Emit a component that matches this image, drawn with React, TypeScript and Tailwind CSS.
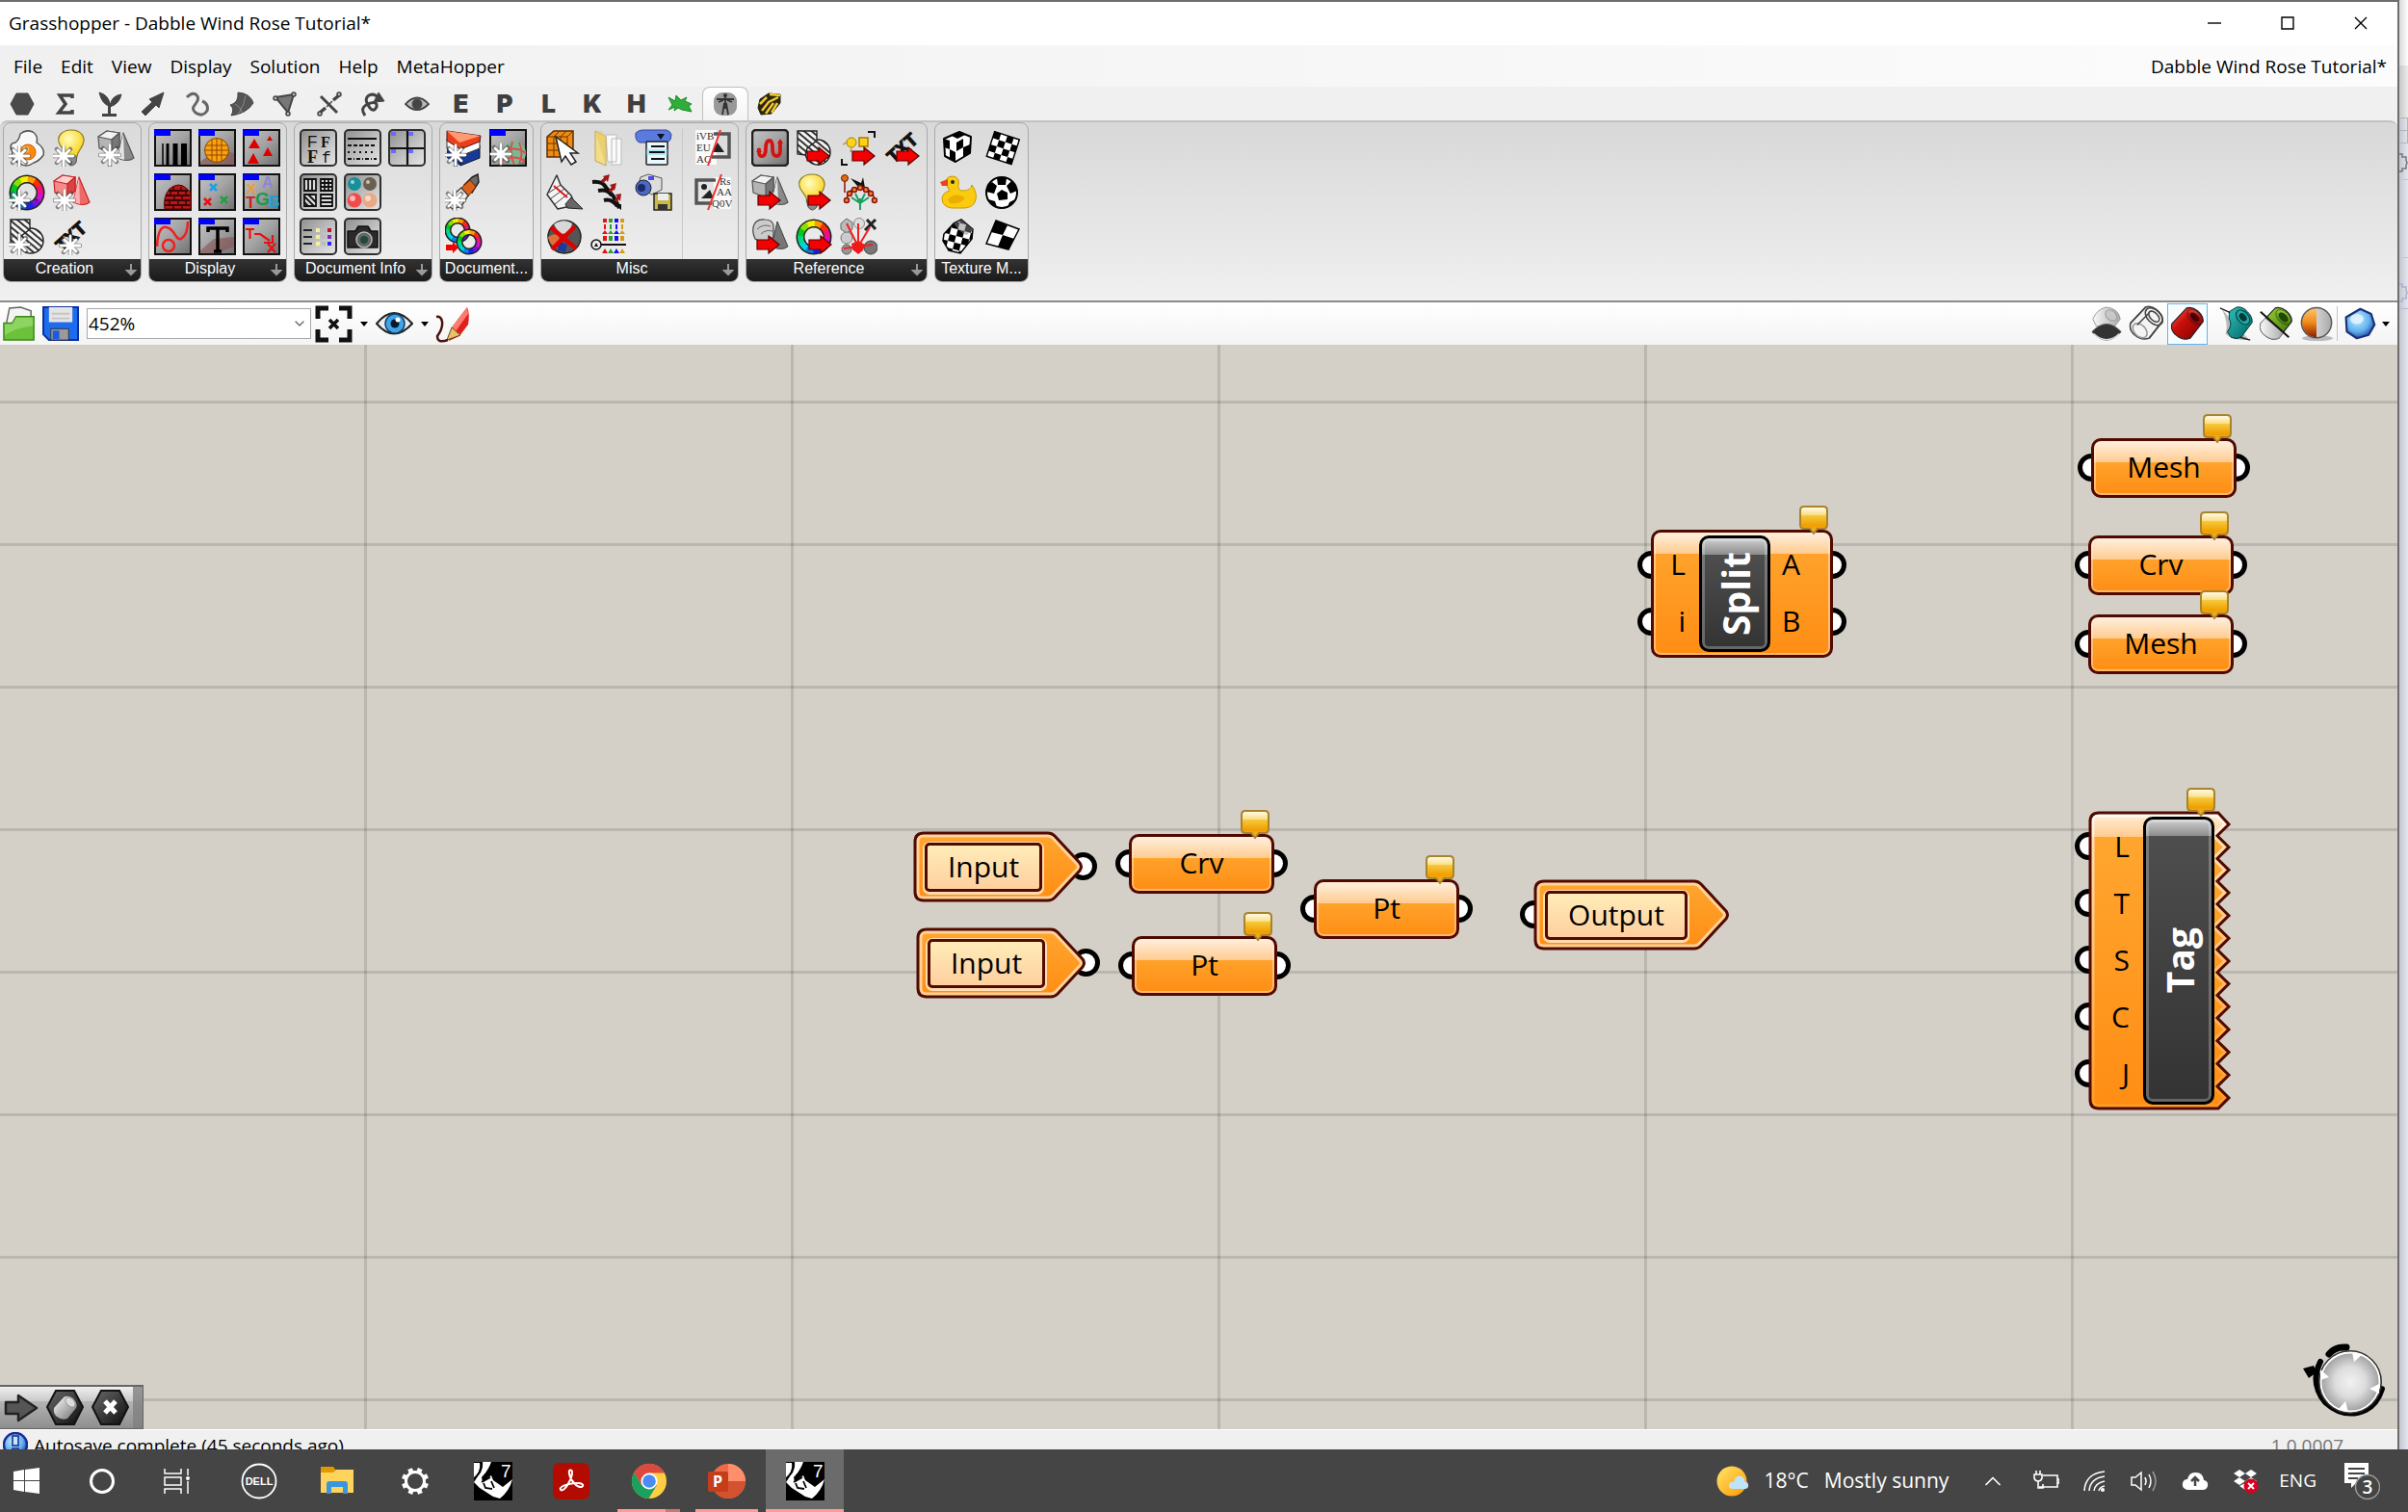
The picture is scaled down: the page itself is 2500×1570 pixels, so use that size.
import type { ReactNode } from "react";
import { ChevronDown, ChevronUp } from "lucide-react";

type Kids = { children?: ReactNode };

const hues = [
  "#ff2a00", "#ff9d00", "#f4f000", "#8be000", "#00c81e", "#00d68c",
  "#00d5e0", "#0084f0", "#1c22e8", "#7a10e0", "#d010d0", "#f0107a",
];

/* ---------- drawing helpers ---------- */

function Defs() {
  return (
    <svg className="absolute h-0 w-0" aria-hidden>
      <defs>
        <linearGradient id="plate" x1="0" y1="0" x2="1" y2="1">
          <stop offset="0" stopColor="#c4c4c4" />
          <stop offset=".5" stopColor="#a2a2a2" />
          <stop offset="1" stopColor="#6f6f6f" />
        </linearGradient>
        <linearGradient id="tile" x1="0" y1="0" x2="1" y2="1">
          <stop offset="0" stopColor="#8f8f8f" />
          <stop offset=".6" stopColor="#c6c6c6" />
          <stop offset="1" stopColor="#e6e6e6" />
        </linearGradient>
        <linearGradient id="steel" x1="0" y1="0" x2="1" y2="1">
          <stop offset="0" stopColor="#ffffff" />
          <stop offset="1" stopColor="#6e6e6e" />
        </linearGradient>
        <linearGradient id="silver" x1="0" y1="0" x2="1" y2="0">
          <stop offset="0" stopColor="#fafafa" />
          <stop offset="1" stopColor="#a8a8a8" />
        </linearGradient>
        <linearGradient id="amber" x1="0" y1="0" x2="0" y2="1">
          <stop offset="0" stopColor="#ffc46a" />
          <stop offset=".5" stopColor="#f08a18" />
          <stop offset="1" stopColor="#8e1c00" />
        </linearGradient>
        <linearGradient id="orange" x1="0" y1="0" x2="0" y2="1">
          <stop offset="0" stopColor="#ffa62f" />
          <stop offset="1" stopColor="#ff8d14" />
        </linearGradient>
        <linearGradient id="balloon" x1="0" y1="0" x2="0" y2="1">
          <stop offset="0" stopColor="#fffdf0" />
          <stop offset=".3" stopColor="#fbe08a" />
          <stop offset=".34" stopColor="#f6c83c" />
          <stop offset=".7" stopColor="#f09f00" />
          <stop offset="1" stopColor="#f0b640" />
        </linearGradient>
        <linearGradient id="red" x1="0" y1="0" x2="1" y2="1">
          <stop offset="0" stopColor="#ff6a5a" />
          <stop offset=".4" stopColor="#c80f0a" />
          <stop offset="1" stopColor="#7a0000" />
        </linearGradient>
        <linearGradient id="teal" x1="0" y1="0" x2="1" y2="1">
          <stop offset="0" stopColor="#2ec4c0" />
          <stop offset="1" stopColor="#005f5f" />
        </linearGradient>
        <linearGradient id="green" x1="0" y1="0" x2="1" y2="1">
          <stop offset="0" stopColor="#a8dc3a" />
          <stop offset="1" stopColor="#2f6a00" />
        </linearGradient>
        <linearGradient id="hex" x1="0" y1="0" x2="1" y2="1">
          <stop offset="0" stopColor="#6a6a6a" />
          <stop offset="1" stopColor="#0c0c0c" />
        </linearGradient>
        <linearGradient id="sun" x1="0" y1="0" x2="1" y2="1">
          <stop offset="0" stopColor="#ffe66a" />
          <stop offset="1" stopColor="#ff9800" />
        </linearGradient>
        <radialGradient id="sky" cx=".4" cy=".35" r=".7">
          <stop offset="0" stopColor="#c8ecff" />
          <stop offset=".6" stopColor="#62b2ee" />
          <stop offset="1" stopColor="#1c3a9a" />
        </radialGradient>
        <radialGradient id="dial" cx=".5" cy=".5" r=".5">
          <stop offset="0" stopColor="#f2f2f2" />
          <stop offset=".5" stopColor="#dcdcdc" />
          <stop offset="1" stopColor="#9a9a9a" />
        </radialGradient>
        <radialGradient id="bulb" cx=".4" cy=".35" r=".7">
          <stop offset="0" stopColor="#fffcc0" />
          <stop offset="1" stopColor="#f8d010" />
        </radialGradient>
        <pattern id="hatch" width="5" height="5" patternUnits="userSpaceOnUse" patternTransform="rotate(40)">
          <rect width="5" height="5" fill="#f4f4f4" />
          <rect width="5" height="2" fill="#333" />
        </pattern>
        <pattern id="check" width="14" height="14" patternUnits="userSpaceOnUse" patternTransform="rotate(15)">
          <rect width="14" height="14" fill="#fff" />
          <path d="M0 0h7v7H0zM7 7h7v7H7z" fill="#000" />
        </pattern>
      </defs>
    </svg>
  );
}

function Svg({ children, className = "h-[39px] w-[39px]" }: Kids & { className?: string }) {
  return (
    <svg viewBox="0 0 39 39" className={className} fill="none" aria-hidden>
      {children}
    </svg>
  );
}

const Plate = ({ children }: Kids) => (
  <Svg>
    <rect x="1" y="1" width="37" height="37" fill="url(#plate)" stroke="#111" strokeWidth="2" />
    {children}
    <rect x="0" y="1" width="17" height="6" fill="#0000ff" />
  </Svg>
);

const Tile = ({ children }: Kids) => (
  <Svg>
    <rect x="1" y="1" width="37" height="37" rx="4" fill="url(#tile)" stroke="#2e2e2e" strokeWidth="2" />
    {children}
  </Svg>
);

const Spark = ({ x = 13, y = 26 }) => (
  <g transform={`translate(${x} ${y})`} strokeLinecap="round">
    <path d="M0-9V11M-10 0H10M-7-7L7 7M7-7L-7 7" stroke="#333" strokeWidth="4.500" opacity=".55" />
    <path d="M0-10V10M-10 0H10M-6-6L6 6M6-6L-6 6" stroke="#fff" strokeWidth="2.800" />
  </g>
);

const RedArrow = ({ x = 10, y = 27 }) => (
  <path
    transform={`translate(${x} ${y})`}
    d="M1-5H13V-9L24 0 13 9V5H1Z"
    fill="#f40000"
    stroke="#5a0000"
    strokeWidth="1.2"
  />
);

const Ring = ({ cx = 19, cy = 20, r = 14, w = 6 }) => (
  <g transform={`rotate(-60 ${cx} ${cy})`}>
    <circle cx={cx} cy={cy} r={r} stroke="#222" strokeWidth={w + 3} fill="none" />
    {hues.map((c, i) => (
      <circle
        key={c}
        cx={cx}
        cy={cy}
        r={r}
        stroke={c}
        strokeWidth={w}
        pathLength="12"
        strokeDasharray="1.1 10.9"
        strokeDashoffset={i}
      />
    ))}
  </g>
);

const Solids = ({ tint = false }) => (
  <g stroke={tint ? "#c22" : "#555"} strokeWidth="1.2" strokeLinejoin="round">
    <path d="M27 4L38 30Q32 35 21 30Z" fill={tint ? "#ee6a6a" : "#8a8a8a"} />
    <path d="M27 4L21 30 28 32Z" fill={tint ? "#ffb0b0" : "#e4e4e4"} stroke="none" />
    <path d="M1 8L10 2 23 4 23 18 15 25 2 20Z" fill={tint ? "#f58a8a" : "#b4b4b4"} />
    <path d="M1 8L10 2 23 4 15 11Z" fill={tint ? "#ffd0d0" : "#f2f2f2"} />
    <path d="M15 11L23 4V18L15 25Z" fill={tint ? "#d84444" : "#777"} />
  </g>
);

const Bulb = () => (
  <g>
    <path d="M11 27H23L22 35Q17 41 13 35Z" fill="#8a8a8a" stroke="#555" />
    <path d="M17 1C28 1 32 9 29 16C27 21 24 23 23 28H12C11 23 8 21 5 16C1 8 7 1 17 1Z" fill="url(#bulb)" stroke="#8a7a20" strokeWidth="1.2" />
  </g>
);

const Hatched = () => (
  <g fill="url(#hatch)" stroke="#222" strokeWidth="1.4">
    <circle cx="23" cy="24" r="13" />
    <path d="M2 2H22V12L12 20 10 27 2 26Z" />
  </g>
);

const Txt = () => (
  <text
    transform="rotate(-42 19 20)"
    x="19"
    y="26"
    textAnchor="middle"
    fontSize="20"
    fontWeight="700"
    fill="#111"
    stroke="#111"
    fontFamily="Liberation Mono, monospace"
  >
    TXT
  </text>
);

const Camera = () => (
  <g>
    <path d="M4 14H12L15 9H25L28 14H35V31H4Z" fill="#2a2a2a" stroke="#111" strokeWidth="1.5" strokeLinejoin="round" />
    <circle cx="21" cy="23" r="8" fill="#666" stroke="#bbb" strokeWidth="1.5" />
    <circle cx="21" cy="23" r="4" fill="#1e4a3a" />
  </g>
);

/* ---------- ribbon icons ---------- */

const icons: Record<string, ReactNode> = {
  "New object": (
    <Svg>
      <path d="M12 5Q18 0 25 3Q31 7 29 14Q38 20 36 27Q32 33 26 35Q18 41 11 35Q1 32 4 24Q-1 15 7 14Q11 11 12 5Z" fill="#f8f8f8" stroke="#555" strokeWidth="1.5" />
      <circle cx="20" cy="24" r="8" fill="#ff8a0c" stroke="#c66000" />
      <circle cx="18" cy="21" r="3" fill="#ffd48a" />
      <Spark x={11} y={28} />
    </Svg>
  ),
  "New light": <Svg><g transform="translate(2 0)"><Bulb /></g><Spark x={11} y={28} /></Svg>,
  "New block": <Svg><Solids /><Spark x={13} y={27} /></Svg>,
  "New colour": <Svg><Ring /><Spark x={11} y={28} /></Svg>,
  "New red block": <Svg><Solids tint /><Spark x={12} y={28} /></Svg>,
  "New hatch": <Svg><Hatched /><Spark x={11} y={28} /></Svg>,
  "New text": <Svg><Txt /><Spark x={18} y={29} /></Svg>,

  "Line weights": (
    <Plate>
      <path d="M9 15V38" stroke="#000" strokeWidth="1.5" />
      <path d="M14 15V38" stroke="#000" strokeWidth="3" />
      <path d="M22 15V38" stroke="#000" strokeWidth="5" />
      <path d="M31 15V38" stroke="#000" strokeWidth="6" />
    </Plate>
  ),
  "Mesh preview": (
    <Plate>
      <path d="M2 34L20 20 37 25V37H2Z" fill="#8a5a5a" opacity=".7" />
      <circle cx="19" cy="22" r="12.5" fill="#ffa010" stroke="#7a4a00" />
      <path d="M8 17H30M7 22H31M8 27H30M14 11V33M19 10V34M24 11V33" stroke="#8a4a00" strokeWidth="1" />
    </Plate>
  ),
  "Symbol display": (
    <Plate>
      <path d="M6 20L12 10 18 20ZM25 12L28 7 31 12ZM21 28L26 19 31 28ZM5 36L11 25 17 36Z" fill="#e00000" />
    </Plate>
  ),
  "Brick preview": (
    <Plate>
      <path d="M11 37Q9 24 16 16Q26 8 34 16L38 20V37Z" fill="#b81818" stroke="#500" />
      <path d="M15 18H35M12 23H37M11 28H37M11 33H37" stroke="#3a0505" strokeWidth="1.800" />
      <path d="M20 14V18M28 14V18M17 19V23M25 19V23M33 19V23M21 24V28M29 24V28M16 29V33M25 29V33M33 29V33M20 34V37M29 34V37" stroke="#3a0505" strokeWidth="1.500" />
    </Plate>
  ),
  "Point display": (
    <Plate>
      <path d="M12 11L19 18M19 11L12 18" stroke="#1aa0e8" strokeWidth="2.5" />
      <path d="M6 26L13 33M13 26L6 33" stroke="#e81010" strokeWidth="2.5" />
      <path d="M23 24L30 31M30 24L23 31" stroke="#20a040" strokeWidth="2.5" />
    </Plate>
  ),
  "Text colours": (
    <Plate>
      <g fontFamily="Liberation Sans, sans-serif" fontWeight="700">
        <text x="20" y="15" fontSize="16" fill="#8a86d8">A</text>
        <text x="4" y="21" fontSize="15" fill="#f09a30">X</text>
        <text x="3" y="36" fontSize="17" fill="#d02020">T</text>
        <text x="13" y="33" fontSize="19" fill="#189a48">G</text>
        <text x="27" y="35" fontSize="16" fill="#1aa0d8">B</text>
      </g>
    </Plate>
  ),
  "Curve display": (
    <Plate>
      <path d="M3 30Q4 8 13 10C22 12 22 24 28 22Q35 18 35 4" stroke="#f02020" strokeWidth="2.5" />
      <circle cx="15" cy="29" r="6" stroke="#f02020" strokeWidth="2.5" />
    </Plate>
  ),
  "Text tag": (
    <Plate>
      <path d="M2 34L16 22 37 20V30L20 37H2Z" fill="#8a4a4a" opacity=".55" />
      <path d="M10 15V11H30V15M20 10V34M16 35H24" stroke="#000" strokeWidth="3.500" />
    </Plate>
  ),
  "Leader": (
    <Plate>
      <path d="M3 12H12M7.500 12V22M12 17H18L28 24M31 18V26H22M26 27L34 36M34 27L26 36" stroke="#e81010" strokeWidth="2.2" />
    </Plate>
  ),

  "Fonts": (
    <Tile>
      <g fill="#111">
        <text x="8" y="19" fontSize="17" fontFamily="Liberation Sans, sans-serif">F</text>
        <text x="22" y="19" fontSize="16" fontWeight="700" fontFamily="Liberation Serif, serif">F</text>
        <text x="8" y="35" fontSize="18" fontWeight="700" fontFamily="Liberation Serif, serif">F</text>
        <text x="23" y="35" fontSize="16" fontFamily="Liberation Mono, monospace">f</text>
      </g>
    </Tile>
  ),
  "Linetypes": (
    <Tile>
      <path d="M4 10H34" stroke="#111" strokeWidth="2" />
      <path d="M4 17H34" stroke="#111" strokeWidth="2" strokeDasharray="4 2" />
      <path d="M4 24H34" stroke="#111" strokeWidth="2" strokeDasharray="2 4" />
      <path d="M4 31H34" stroke="#111" strokeWidth="2" strokeDasharray="4 2 1 2" />
    </Tile>
  ),
  "Views": (
    <Tile>
      <path d="M20 2V37M2 20H37" stroke="#111" strokeWidth="2.2" />
      <path d="M3 3H8V7H3ZM21 3H26V7H21ZM3 21H8V25H3ZM21 21H26V25H21Z" fill="#6a6af4" />
    </Tile>
  ),
  "Hatches": (
    <Tile>
      <g stroke="#111" strokeWidth="1.800">
        <path d="M5 6H17V18H5ZM22 6H34V18H22ZM5 22H17V34H5ZM22 22H34V34H22Z" fill="#ddd" />
        <path d="M9 6V18M13 6V18M26 6V18M30 6V18M22 10H34M22 14H34M22 26H34M22 30H34M5 24L15 34M9 22L17 30M5 30L9 34" />
      </g>
    </Tile>
  ),
  "Materials": (
    <Tile>
      <circle cx="11" cy="11" r="7" fill="#16909a" />
      <circle cx="27" cy="11" r="7" fill="#6a6050" />
      <circle cx="11" cy="28" r="7.500" fill="#f24a4a" />
      <circle cx="27" cy="28" r="7.500" fill="#eaa884" />
      <g fill="#fff" opacity=".6">
        <circle cx="9" cy="9" r="2" />
        <circle cx="25" cy="9" r="2" />
        <circle cx="9" cy="26" r="3" />
        <circle cx="25" cy="26" r="3" />
      </g>
    </Tile>
  ),
  "Layers": (
    <Tile>
      <path d="M4 13H13M4 20H13M4 27H13" stroke="#222" strokeWidth="2" />
      <path d="M17 11h4v4h-4zM17 18h4v4h-4zM17 25h4v4h-4z" fill="#f4f0a0" />
      <path d="M23 11h4v4h-4zM23 18h4v4h-4zM23 25h4v4h-4z" fill="#bbb" />
      <path d="M29 11h4v4h-4z" fill="#c01030" />
      <path d="M29 18h4v4h-4z" fill="#7a30c0" />
      <path d="M29 25h4v4h-4z" fill="#2a2af0" />
    </Tile>
  ),
  "Snapshot": <Tile><Camera /></Tile>,

  "New layer": (
    <Svg>
      <path d="M2 18L16 26V38L2 30Z" fill="#12308a" />
      <path d="M16 26L36 17V30L16 38Z" fill="#163a9a" stroke="#112" />
      <path d="M2 10L16 19V28L2 20ZM16 19L36 11V20L16 28Z" fill="#fff" stroke="#333" />
      <path d="M2 2L37 7 36 13 16 21 2 12Z" fill="#e8401c" stroke="#511" />
      <path d="M2 2L37 7 15 14Z" fill="#ff9a72" />
      <Spark x={11} y={27} />
    </Svg>
  ),
  "New display mode": (
    <Plate>
      <circle cx="26" cy="25" r="12" fill="#7ab894" />
      <path d="M12 25Q26 16 38 25M24 13Q20 25 26 37M31 14Q36 25 31 36M13 33Q26 26 37 33" stroke="#e04a4a" strokeWidth="1.800" />
      <Spark x={12} y={26} />
    </Plate>
  ),
  "New brush": (
    <Svg>
      <path d="M28 4L34 1 35 9 28 20 20 12Z" fill="#6a6a6a" stroke="#222" strokeWidth="1.500" />
      <path d="M17 15L26 7 32 14 24 24Z" fill="#e0601a" stroke="#6a2a00" />
      <path d="M4 34L8 23 17 15 24 23 17 34 8 37Z" fill="#f2f2f2" stroke="#444" strokeWidth="1.500" />
      <Spark x={10} y={28} />
    </Svg>
  ),
  "Swap colours": (
    <Svg>
      <Ring cx={13} cy={13} r={10} w={4} />
      <Ring cx={25} cy={25} r={10} w={4} />
      <path d="M1 28H8V25L14 31 8 37V34H1Z" fill="#f40000" />
    </Svg>
  ),

  "Select geometry": (
    <Svg>
      <path d="M1 8L8 2H28L28 22 22 29H1Z" fill="#f08a10" stroke="#5a2e00" strokeWidth="1.500" />
      <path d="M1 8H22L28 2M22 8V29M1 15H22M1 22H22M8 8V29M15 8V29M8 8L14 2M15 8L21 2" stroke="#6a3400" />
      <path d="M10 8L33 25H25L31 34 26 37 20 28 16 34Z" fill="#fff" stroke="#222" strokeWidth="1.500" />
    </Svg>
  ),
  "File path": (
    <Svg>
      <path d="M16 6H27V34H18ZM22 10H32V37H22Z" fill="#fafafa" stroke="#bbb" />
      <path d="M5 2L16 8V38L5 33Z" fill="#f2dd88" stroke="#c0a850" />
      <path d="M5 2H12L16 8V38" fill="#e4c860" opacity=".6" />
    </Svg>
  ),
  "Value list": (
    <Svg>
      <path d="M1 4Q4 1 8 1H33Q37 2 38 6Q38 12 34 14H5Q0 12 1 4Z" fill="#5a7ae0" stroke="#334a9a" />
      <path d="M23 5H31L27 11Z" fill="#112" />
      <rect x="12" y="13" width="22" height="24" rx="1" fill="#e8f8fc" stroke="#222" strokeWidth="1.500" />
      <path d="M12 21H34V27H12Z" fill="#7adcec" opacity=".5" />
      <path d="M17 18H31M15 24H31M17 31H31" stroke="#111" strokeWidth="1.800" />
    </Svg>
  ),
  "Write notes": (
    <Svg>
      <path d="M1 22L11 2 15 12 26 23 30 33 12 37Z" fill="#f4f4f4" stroke="#333" strokeWidth="1.500" strokeLinejoin="round" />
      <path d="M3 20L15 12M5 26L19 16M9 32L23 21" stroke="#444" />
      <path d="M8 13L22 25" stroke="#e01010" strokeWidth="2" />
      <path d="M20 32L26 25 38 37 22 36Z" fill="#666" stroke="#222" />
    </Svg>
  ),
  "Explode tree": (
    <Svg>
      <path d="M2 9Q12 8 16 14M8 18Q18 16 22 23M14 28Q22 26 28 34M14 12L24 24 30 36" stroke="#111" strokeWidth="4" />
      <path d="M12 9L17 4M20 19L25 13M26 29L30 24" stroke="#a01818" strokeWidth="3.500" />
      <path d="M13 3L20 1 18 9ZM20 12L27 10 25 18ZM26 22L32 21 31 29Z" fill="#a01818" />
      <path d="M24 32H32V38Z" fill="#111" />
    </Svg>
  ),
  "Save view": (
    <Svg>
      <path d="M6 4L14 1 28 5V17L18 22 3 14Z" fill="#ddd" stroke="#555" />
      <circle cx="9" cy="15" r="8" fill="#4a6ac0" stroke="#223" />
      <circle cx="7" cy="15" r="4" fill="#1a2a6a" />
      <path d="M14 3H20V7H14Z" fill="#4a4af0" />
      <path d="M20 21H38V38H20Z" fill="#c8b84a" stroke="#222" strokeWidth="1.500" />
      <path d="M24 21H35V28H24Z" fill="#eee" />
      <path d="M24 32H34V38H24Z" fill="#333" />
    </Svg>
  ),
  "Kill render": (
    <Svg>
      <circle cx="19" cy="20" r="17" fill="#555" stroke="#222" strokeWidth="1.500" />
      <path d="M8 7Q18 0 27 6L24 16 14 17Z" fill="#d8d8d8" />
      <path d="M2 20Q8 16 14 18L12 32Q3 28 2 20Z" fill="#e0703a" />
      <path d="M12 24L22 28 20 36 12 34Z" fill="#1c3a9a" />
      <path d="M5 10L31 32M30 9L6 33" stroke="#e00000" strokeWidth="4.500" />
    </Svg>
  ),
  "Gene slider": (
    <Svg>
      {["#e81010", "#30a030", "#1010f0", "#d89a10"].map((c, i) => (
        <g key={c} transform={`translate(${13 + i * 6} 0)`} fill={c}>
          <path d="M0 1h4v4H0zM1 7h2v5H1zM-1 17L2 13 5 17ZM0 19h4v5H0zM-1 37L2 32 5 37Z" />
        </g>
      ))}
      <path d="M8 28H37" stroke="#111" strokeWidth="2" />
      <circle cx="6" cy="28" r="5" fill="#eee" stroke="#111" strokeWidth="1.500" />
      <path d="M4 30L6 26 8 30Z" fill="#111" />
    </Svg>
  ),
  "Text to image": (
    <Svg>
      <path d="M1 1H23V37H1Z" fill="#fafafa" />
      <path d="M20 5H36V29H18" stroke="#555" strokeWidth="3.500" />
      <path d="M18 24L24 14 31 24Z" fill="#222" />
      <g fontFamily="Liberation Serif, serif" fontSize="11" fill="#333">
        <text x="2" y="11">iVB</text>
        <text x="2" y="23">EU</text>
        <text x="2" y="35">AC</text>
      </g>
      <path d="M27 1L14 38" stroke="#f03030" strokeWidth="2" />
    </Svg>
  ),
  "Image to text": (
    <Svg>
      <path d="M20 4H38V37H20Z" fill="#fafafa" />
      <path d="M22 7H2V31H18" stroke="#555" strokeWidth="3.500" />
      <circle cx="10" cy="14" r="3" fill="#222" />
      <path d="M7 26L16 17 20 26Z" fill="#222" />
      <g fontFamily="Liberation Serif, serif" fontSize="11" fill="#333">
        <text x="26" y="12">Rs</text>
        <text x="23" y="23">AA</text>
        <text x="18" y="35">Q0V</text>
      </g>
      <path d="M28 1L14 38" stroke="#f03030" strokeWidth="2" />
    </Svg>
  ),

  "Curve pipeline": (
    <Svg>
      <rect x="1" y="1" width="37" height="37" rx="4" fill="url(#plate)" stroke="#222" strokeWidth="2.500" />
      <path d="M8 20V24Q8 29 12 28Q15 27 15 20Q15 12 19 12Q22 12 22 20Q22 28 26 28Q30 28 30 23V12" stroke="#d81010" strokeWidth="3.800" />
      <path d="M5 24L8 19 11 24ZM27 15L30 10 33 15Z" fill="#d81010" />
    </Svg>
  ),
  "Hatch reference": <Svg><Hatched /><RedArrow x={11} y={28} /></Svg>,
  "Group reference": (
    <Svg>
      <path d="M29 3H36V9M2 31V37H8" stroke="#111" strokeWidth="2" />
      <circle cx="12" cy="14" r="5" fill="#ffd21a" stroke="#a87800" />
      <path d="M20 9H29V18H20Z" fill="#ffd21a" stroke="#a87800" strokeWidth="1.500" />
      <path d="M7 14L3 16M12 20L11 24" stroke="#a87800" />
      <RedArrow x={12} y={28} />
    </Svg>
  ),
  "Text reference": <Svg><Txt /><RedArrow x={12} y={28} /></Svg>,
  "Block reference": <Svg><Solids /><RedArrow x={6} y={28} /></Svg>,
  "Light reference": <Svg><Bulb /><RedArrow x={12} y={28} /></Svg>,
  "Plant picker": (
    <Svg>
      <circle cx="5" cy="5" r="3.500" fill="#e06a10" stroke="#6a1a00" />
      <path d="M5 9V20" stroke="#8a1010" strokeWidth="1.500" />
      <path d="M11 5L22 10 24 4 26 15 18 13Z" fill="#111" />
      <path d="M21 38V26M21 31L12 25M21 31L30 25M21 31L16 21M21 31L26 21" stroke="#18a060" strokeWidth="2" />
      <path d="M7 28Q8 15 21 15Q34 15 36 28" stroke="#8a1010" strokeWidth="1.500" />
      {[[7, 28], [10, 21], [15, 17], [21, 15], [27, 17], [32, 21], [36, 28]].map(([x, y]) => (
        <circle key={x} cx={x} cy={y} r="2.500" fill="#f08a20" stroke="#8a1010" strokeWidth="1.500" />
      ))}
    </Svg>
  ),
  "Hand block": (
    <Svg>
      <path d="M27 4L38 30Q32 35 21 30Z" fill="#777" stroke="#444" />
      <path d="M2 10Q4 1 14 2Q22 2 23 8V20L14 27 4 22Q1 16 2 10Z" fill="#ccc" stroke="#444" strokeWidth="1.200" />
      <path d="M6 12Q12 6 20 9M10 17Q15 12 22 14" stroke="#666" />
      <RedArrow x={5} y={28} />
    </Svg>
  ),
  "Colour reference": <Svg><Ring /><RedArrow x={13} y={28} /></Svg>,
  "Explode all": (
    <Svg>
      <path d="M1 6L7 1 13 5V12L7 16 1 12Z" fill="#bbb" stroke="#666" />
      <circle cx="20" cy="6" r="5.500" fill="#ddd" stroke="#888" />
      <circle cx="7" cy="21" r="6" fill="#ccc" stroke="#777" />
      <circle cx="32" cy="31" r="7" fill="#777" stroke="#444" />
      <circle cx="7" cy="33" r="5" fill="#999" stroke="#555" />
      <path d="M28 2L37 12M37 2L26 13" stroke="#222" strokeWidth="3" />
      <path d="M19 30L7 6M19 30L19 6M19 30L31 10M19 30L4 32M19 30L34 28" stroke="#f02020" strokeWidth="2" />
      <path d="M12 27L19 24 26 28 24 34 19 38 13 33Z" fill="#f01818" />
    </Svg>
  ),

  "Box mapping": (
    <Svg>
      <path d="M4 10L20 3 32 8 31 25 16 34 5 28Z" fill="#fff" stroke="#000" strokeWidth="2" strokeLinejoin="round" />
      <path d="M12 7L20 3 26 6 18 10ZM4 10L10 12V21L4 19ZM10 21L16 24V34L10 31ZM17 14L24 10V19L17 23ZM24 19L31 16V25L24 29Z" fill="#000" />
    </Svg>
  ),
  "Planar mapping": (
    <Svg>
      <g transform="rotate(18 19 19) translate(6 6)">
        <path d="M0 0H27V27H0Z" fill="#fff" stroke="#000" strokeWidth="1.500" />
        <path d="M0 0h7v7H0zM14 0h7v7h-7zM7 7h7v7H7zM21 7h6v7h-6zM0 14h7v7H0zM14 14h7v7h-7zM7 21h7v6H7zM21 21h6v6h-6z" fill="#000" />
      </g>
    </Svg>
  ),
  "Custom mapping": (
    <Svg>
      <path d="M7 13Q4 3 13 3Q21 4 19 12Q18 18 24 18Q32 18 33 12Q40 22 36 30Q34 35 26 36H12Q3 35 2 27Q2 20 10 18Z" fill="#fccb10" stroke="#c89a00" />
      <path d="M8 27Q17 18 26 26Q20 33 10 31Z" fill="#eab000" />
      <path d="M0 9L8 6 8 13 2 13Z" fill="#e8451a" />
      <circle cx="13" cy="9" r="2" fill="#222" />
    </Svg>
  ),
  "Sphere mapping": (
    <Svg>
      <circle cx="18" cy="20" r="16" fill="#fff" stroke="#000" strokeWidth="2" />
      <path d="M13 5Q18 3 23 5L22 12 14 12ZM2 19Q3 12 8 9L13 13 10 21ZM34 18Q33 11 28 8L23 13 27 21ZM13 21L18 17 24 20 24 27 15 28ZM4 27L11 29 13 35Q6 33 4 27ZM32 27L26 30 24 35Q30 33 32 27Z" fill="#000" />
    </Svg>
  ),
  "Cylinder mapping": (
    <Svg>
      <path d="M14 6L22 2 34 12 33 22 21 37 9 34 3 24 4 17Z" fill="url(#check)" stroke="#000" strokeWidth="1.500" />
      <path d="M14 6L22 2 34 12 28 18Q22 17 14 6Z" fill="#888" opacity=".5" />
    </Svg>
  ),
  "UV mapping": (
    <Svg>
      <path d="M12 3L36 12 25 33 2 27Z" fill="#fff" stroke="#000" strokeWidth="1.500" />
      <path d="M12 3L24 8 19 18 7 15ZM19 18L31 22 25 33 14 30Z" fill="#000" />
    </Svg>
  ),
};

type Panel = { label: string; more: boolean; width: string; cols: string; groups: string[][] };

// each group is laid out row by row; an empty name leaves its cell free
const panels: Panel[] = [
  {
    label: "Creation",
    more: true,
    width: "w-36",
    cols: "grid-cols-[repeat(3,39px)]",
    groups: [["New object", "New light", "New block", "New colour", "New red block", "", "New hatch", "New text"]],
  },
  {
    label: "Display",
    more: true,
    width: "w-36",
    cols: "grid-cols-[repeat(3,39px)]",
    groups: [
      [
        "Line weights", "Mesh preview", "Symbol display",
        "Brick preview", "Point display", "Text colours",
        "Curve display", "Text tag", "Leader",
      ],
    ],
  },
  {
    label: "Document Info",
    more: true,
    width: "w-36",
    cols: "grid-cols-[repeat(3,39px)]",
    groups: [["Fonts", "Linetypes", "Views", "Hatches", "Materials", "", "Layers", "Snapshot"]],
  },
  {
    label: "Document...",
    more: false,
    width: "w-[98px]",
    cols: "grid-cols-[repeat(2,39px)]",
    groups: [["New layer", "New display mode", "New brush", "", "Swap colours"]],
  },
  {
    label: "Misc",
    more: true,
    width: "w-[206px]",
    cols: "grid-cols-[repeat(3,39px)]",
    groups: [
      [
        "Select geometry", "File path", "Value list",
        "Write notes", "Explode tree", "Save view",
        "Kill render", "Gene slider",
      ],
      ["Text to image", "Image to text"],
    ],
  },
  {
    label: "Reference",
    more: true,
    width: "w-[189px]",
    cols: "grid-cols-[repeat(4,39px)]",
    groups: [
      [
        "Curve pipeline", "Hatch reference", "Group reference", "Text reference",
        "Block reference", "Light reference", "Plant picker", "",
        "Hand block", "Colour reference", "Explode all",
      ],
    ],
  },
  {
    label: "Texture M...",
    more: false,
    width: "w-[98px]",
    cols: "grid-cols-[repeat(2,39px)]",
    groups: [
      ["Box mapping", "Planar mapping", "Custom mapping", "Sphere mapping", "Cylinder mapping", "UV mapping"],
    ],
  },
];

function RibbonPanel({ panel }: { panel: Panel }) {
  return (
    <section
      className={`flex shrink-0 flex-col overflow-hidden rounded-lg border border-[#a9a9a9] bg-linear-to-b from-[#dadada] to-[#f0f0f0] ${panel.width}`}
    >
      <div className="flex h-[141px] pt-[6px] pl-[5px]">
        {panel.groups.map((group, g) => (
          <div
            key={g}
            className={
              g === 0
                ? `grid auto-rows-[39px] content-start gap-[7px] ${panel.cols}`
                : "ml-2.5 grid auto-rows-[39px] content-start gap-[7px] border-l border-[#c8c8c8] pl-3"
            }
          >
            {group.map((name, i) =>
              name ? (
                <button key={name} type="button" aria-label={name} title={name}>
                  {icons[name]}
                </button>
              ) : (
                <span key={i} />
              ),
            )}
          </div>
        ))}
      </div>
      <div className="flex h-[23px] items-start bg-linear-to-b from-[#333] to-[#1a1a1a] font-['Liberation_Sans',Arial,sans-serif] text-base text-white">
        <h2 className="flex-1 text-center leading-5 whitespace-nowrap">{panel.label}</h2>
        {panel.more && (
          <svg viewBox="0 0 12 14" className="mt-1 mr-1 h-3.5 w-3" aria-hidden>
            <path d="M6 1V9M2 8L6 12 10 8Z" fill="#999" stroke="#999" strokeWidth="2" />
          </svg>
        )}
      </div>
    </section>
  );
}

/* ---------- category tabs ---------- */

const TabSvg = ({ children }: Kids) => (
  <svg viewBox="0 0 26 26" className="h-[26px] w-[26px]" fill="none" stroke="#444" strokeWidth="2.500" aria-hidden>
    {children}
  </svg>
);

const Letter = ({ children }: Kids) => (
  <span className="font-['Inter','Open_Sans',sans-serif] text-[26px] leading-7 font-black text-[#3f3f3f]">{children}</span>
);

const tabs: [string, ReactNode][] = [
  ["Params", <TabSvg><path d="M7 2H19L25 13 19 24H7L1 13Z" fill="#4a4a4a" strokeWidth="1" /></TabSvg>],
  ["Maths", <TabSvg><path d="M20 7V4H7L13 13 6 22H20V19" strokeWidth="3.500" /></TabSvg>],
  ["Sets", <TabSvg><path d="M13 24V15Q5 14 2 1Q13 4 13 15Q15 4 25 3Q23 13 13 16Z" fill="#444" strokeWidth="1" /><path d="M5 24.500H20M12.500 12V24" strokeWidth="3" /></TabSvg>],
  ["Vector", <TabSvg><path d="M1 21L12 11 9 8 24 1 19 17 16 14 5 25Z" fill="#444" strokeWidth="1" /></TabSvg>],
  ["Curve", <TabSvg><path d="M2 6Q9-1 13 5C17 12 3 15 11 22Q18 27 23 20Q25 13 18 10" stroke="#666" strokeWidth="3" /></TabSvg>],
  ["Surface", <TabSvg><path d="M9 1Q22 2 25 12Q18 23 2 25Q6 18 1 14Q10 12 9 1Z" fill="#555" strokeWidth="1" /><path d="M17 4Q16 14 9 24M6 13Q12 16 13 22" stroke="#888" strokeWidth="1" /></TabSvg>],
  ["Mesh", <TabSvg><path d="M3 6L22 3 16 22Z" fill="#777" strokeWidth="2" /><circle cx="3" cy="7" r="2" fill="#bbb" strokeWidth="1.500" /><circle cx="22" cy="3" r="2" fill="#bbb" strokeWidth="1.500" /><circle cx="16" cy="23" r="2" fill="#bbb" strokeWidth="1.500" /></TabSvg>],
  ["Intersect", <TabSvg><path d="M3 22L9 17M17 9L23 4" strokeWidth="3.500" /><path d="M4 5L21 22" strokeWidth="3" /><path d="M10 16L16 10" strokeWidth="1.500" /><circle cx="23" cy="3" r="2" fill="#bbb" strokeWidth="1.500" /><circle cx="3" cy="23" r="2" fill="#bbb" strokeWidth="1.500" /></TabSvg>],
  ["Transform", <TabSvg><path d="M5 25Q-1 17 8 13Q18 9 17 16Q14 22 10 17Q3 8 9 4Q15 1 20 8" strokeWidth="3" /><path d="M14 11L25 10 19 1Z" fill="#444" strokeWidth="1" /></TabSvg>],
  ["Display", <TabSvg><path d="M1 13Q13 0 25 13Q13 25 1 13Z" fill="#bbb" strokeWidth="1.800" /><circle cx="13" cy="13" r="5" fill="#444" strokeWidth="1" /></TabSvg>],
  ["Extra", <Letter>E</Letter>],
  ["Pufferfish", <Letter>P</Letter>],
  ["LunchBox", <Letter>L</Letter>],
  ["Kangaroo2", <Letter>K</Letter>],
  ["Heteroptera", <Letter>H</Letter>],
  ["Hopper", <TabSvg><path d="M1 6L8 10 9 4 14 9 20 6 18 10 25 13 22 15 25 21 15 19 11 17 7 20 8 16 1 19 5 14Z" fill="#2fae3a" stroke="#1d8a2a" strokeWidth="1" /></TabSvg>],
  ["Human", <TabSvg><rect x="1" y="1" width="24" height="24" rx="9" fill="#999" stroke="none" /><path d="M4 8H22M13 4V13M12 12L10 24M14 12L16 24M13 8V18M6 11L11 9M20 11L15 9" stroke="#333" strokeWidth="1.800" /><circle cx="13" cy="4" r="2" fill="#333" stroke="none" /></TabSvg>],
  ["MetaHopper", <TabSvg><path d="M3 8L12 2 24 3 24 12 15 23 4 24 1 17Z" fill="#2a2410" stroke="#2a2410" strokeWidth="1" /><path d="M13 3L24 4M22 6L12 11 5 20M17 12L9 23M10 6L3 13M21 12L15 22" stroke="#f2c830" strokeWidth="2.500" /></TabSvg>],
];

/* ---------- quick toolbar ---------- */

const Caret = () => (
  <svg viewBox="0 0 8 5" className="h-[5px] w-2" aria-hidden>
    <path d="M0 0H8L4 5Z" fill="#000" />
  </svg>
);

const Tube = ({ fill, inner }: { fill: string; inner: string }) => (
  <g stroke="#222" strokeWidth="1.200">
    <path d="M2 19L18 2Q24 0 30 5Q37 11 36 17L22 35Q14 38 7 32Q0 27 2 19Z" fill={fill} />
    <ellipse cx="27" cy="12" rx="10" ry="6" transform="rotate(45 27 12)" fill={fill} strokeWidth="0.500" />
    <ellipse cx="27" cy="12" rx="6" ry="3.500" transform="rotate(45 27 12)" fill={inner} strokeWidth="0.500" />
  </g>
);

const Divider = () => <span className="h-9 w-px bg-[#c4c4c4]" />;

function ToolButton({ label, children, active = false }: Kids & { label: string; active?: boolean }) {
  return (
    <button
      type="button"
      aria-label={label}
      className={`flex h-[43px] w-[42px] items-center justify-center ${active ? "border border-[#66b4e8] bg-[#f8fcff]" : ""}`}
    >
      {children}
    </button>
  );
}

function Toolbar() {
  return (
    <div className="flex h-11 items-center bg-linear-to-b from-white to-[#f4f4f4]">
      <ToolButton label="Open">
        <Svg className="h-[38px] w-[38px]">
          <path d="M5 18L8 3 20 2 31 6V20H5Z" fill="#f4f4f4" stroke="#666" strokeWidth="1.500" />
          <path d="M2 37V19H11L15 12H34V37Z" fill="#6cc03a" stroke="#3a8a1a" strokeWidth="1.500" />
          <path d="M3 20H11L15 13H33V22Q14 24 3 32Z" fill="#9ade70" opacity=".7" />
        </Svg>
      </ToolButton>
      <ToolButton label="Save">
        <Svg className="h-[38px] w-[38px]">
          <path d="M1 2H38V37H7L1 31Z" fill="#1c6cf0" stroke="#0c2f9a" strokeWidth="2" />
          <path d="M7 2H32V18H7Z" fill="#e4e4e4" />
          <path d="M10 9H29M10 14H29" stroke="#c4c4c4" strokeWidth="2" />
          <path d="M9 25H28V37H9Z" fill="#9a9a9a" stroke="#333" />
          <path d="M11 27H18V36H11Z" fill="#1a5ae0" />
        </Svg>
      </ToolButton>
      <span className="ml-1">
        <Divider />
      </span>
      <label className="relative ml-0.5 block">
        <span className="sr-only">Zoom</span>
        <select
          defaultValue="452%"
          className="h-8 w-[233px] appearance-none border border-[#a8a8a8] bg-white px-px text-[19px] text-black"
        >
          <option>100%</option>
          <option>452%</option>
        </select>
        <ChevronDown className="pointer-events-none absolute top-2 right-1 h-4 w-4 text-[#666]" strokeWidth={2} />
      </label>
      <button type="button" aria-label="Zoom extents" className="ml-1 flex items-center gap-2">
        <Svg>
          <path d="M3 14V3H14M25 3H36V14M36 25V36H25M14 36H3V25" stroke="#111" strokeWidth="5" />
          <path d="M15 15L24 24M24 15L15 24" stroke="#111" strokeWidth="3.500" />
        </Svg>
        <Caret />
      </button>
      <button type="button" aria-label="Named views" className="ml-2 flex items-center gap-2">
        <Svg>
          <path d="M1 19Q19-3 38 19Q19 40 1 19Z" fill="#e8eef2" stroke="#222" strokeWidth="2" />
          <circle cx="20" cy="19" r="10" fill="#3fa4e8" stroke="#12406a" strokeWidth="1.500" />
          <circle cx="20" cy="19" r="4.500" fill="#051a30" />
          <circle cx="23" cy="15" r="2.500" fill="#fff" />
        </Svg>
        <Caret />
      </button>
      <button type="button" aria-label="Sketch" className="ml-1.5">
        <Svg>
          <path d="M34 2Q37 9 35 20L26 32 15 37 18 23Z" fill="#e0201c" />
          <path d="M34 2L35 9 22 27 18 23Z" fill="#ff7a70" />
          <path d="M18 23L27 31 13 36Z" fill="#e8c070" stroke="#6a4a10" />
          <path d="M14 36Q3 40 3 32Q9 24 8 17Q7 11 2 12" stroke="#4a1410" strokeWidth="2.500" />
        </Svg>
      </button>

      <div className="ml-auto flex items-center pr-2">
        <ToolButton label="No preview">
          <Svg className="h-[37px] w-[37px]">
            <path d="M4 14Q8 4 18 1Q32 2 34 14L28 22H8Z" fill="url(#silver)" stroke="#999" />
            <ellipse cx="24" cy="10" rx="7" ry="5" fill="#c8c8c8" stroke="#999" transform="rotate(40 24 10)" />
            <path d="M3 28Q19 11 35 28Q19 46 3 28Z" fill="#333" stroke="#555" />
            <path d="M5 30Q19 43 33 30" stroke="#ddd" strokeWidth="1.500" />
          </Svg>
        </ToolButton>
        <ToolButton label="Wireframe preview">
          <Svg className="h-[38px] w-[38px]">
            <g stroke="#444" strokeWidth="1.600">
              <path d="M2 19L18 2Q24 0 30 5Q37 11 36 17L22 35Q14 38 7 32Q0 27 2 19Z" fill="#f4f4f4" />
              <ellipse cx="27" cy="12" rx="11" ry="7" transform="rotate(45 27 12)" />
              <ellipse cx="27" cy="12" rx="7" ry="4" transform="rotate(45 27 12)" />
              <ellipse cx="12" cy="27" rx="9" ry="6" transform="rotate(45 12 27)" stroke="#999" />
              <path d="M2 19L18 2M22 35L36 17M9 21L22 8" />
            </g>
          </Svg>
        </ToolButton>
        <ToolButton label="Shaded preview" active>
          <Svg className="h-[37px] w-[37px] shrink-0">
            <Tube fill="url(#red)" inner="#4a0000" />
          </Svg>
        </ToolButton>
        <span className="mx-1">
          <Divider />
        </span>
        <ToolButton label="Selected only">
          <Svg className="h-[37px] w-[37px]">
            <path d="M4 3Q12 20 8 30Q14 37 34 37L22 24Z" fill="#777" opacity=".5" />
            <path d="M12 6L20 1Q27 0 32 6Q38 12 37 18L25 34Q20 37 14 34L10 28Q16 20 12 14Z" fill="url(#teal)" stroke="#033" />
            <ellipse cx="27" cy="12" rx="9" ry="6" transform="rotate(50 27 12)" fill="#23a8a4" stroke="#033" />
            <ellipse cx="27" cy="12" rx="5" ry="3.500" transform="rotate(50 27 12)" fill="#013a3a" />
            <path d="M2 2L13 7M24 34L35 37" stroke="#222" strokeWidth="1.500" />
          </Svg>
        </ToolButton>
        <ToolButton label="Clipping">
          <Svg className="h-[37px] w-[37px]">
            <Tube fill="url(#green)" inner="#1c4a00" />
            <path d="M7 13L2 19Q0 27 7 32Q14 38 22 35L27 29Z" fill="url(#silver)" stroke="#888" />
            <path d="M2 6L33 34" stroke="#111" strokeWidth="2" />
          </Svg>
        </ToolButton>
        <ToolButton label="Material preview">
          <Svg className="h-[37px] w-[37px]">
            <ellipse cx="20" cy="35" rx="17" ry="3" fill="#bbb" />
            <circle cx="19" cy="18" r="16.500" fill="url(#silver)" />
            <path d="M19 2A16 16 0 0 0 19 34Z" fill="url(#amber)" />
            <circle cx="19" cy="18" r="16.500" stroke="#555" strokeWidth="1.500" />
          </Svg>
        </ToolButton>
        <Divider />
        <button type="button" aria-label="Preview quality" className="ml-1.5 flex items-center gap-1.5">
          <Svg className="h-[34px] w-[34px]">
            <path d="M20 2L33 8 37 21 30 33 16 37 4 29 3 12Z" fill="url(#sky)" stroke="#1c2f7a" strokeWidth="2.500" strokeLinejoin="round" />
            <ellipse cx="16" cy="14" rx="8" ry="6" fill="#e4f6ff" opacity=".8" />
          </Svg>
          <Caret />
        </button>
      </div>
    </div>
  );
}

/* ---------- canvas nodes ---------- */

const Grip = ({ className }: { className: string }) => (
  <span className={`absolute h-[29px] w-[29px] rounded-full border-[5px] border-black bg-white ${className}`} />
);

const Balloon = ({ className }: { className: string }) => (
  <svg viewBox="0 0 30 31" className={`absolute h-[31px] w-[30px] ${className}`} aria-hidden>
    <path
      d="M5 1H25Q29 1 29 5V20Q29 24 25 24H19L15 29 11 24H5Q1 24 1 20V5Q1 1 5 1Z"
      fill="url(#balloon)"
      stroke="#a8832a"
      strokeWidth="2"
    />
  </svg>
);

const capsule =
  "rounded-[10px] border-[3px] border-[#500a00] bg-[linear-gradient(to_bottom,#fff0de_0,#ffcb90_22px,#ffa22b_22px,#ff8d14_100%)] shadow-[inset_0_0_0_2px_rgb(255_236_214/0.45)]";

const params = [
  { name: "Mesh", at: "left-[2171px] top-[97px]" },
  { name: "Crv", at: "left-[2168px] top-[198px]" },
  { name: "Mesh", at: "left-[2168px] top-[280px]" },
  { name: "Crv", at: "left-[1172px] top-[508px]" },
  { name: "Pt", at: "left-[1175px] top-[614px]" },
  { name: "Pt", at: "left-[1364px] top-[555px]" },
];

function Param({ name, at }: { name: string; at: string }) {
  return (
    <div className={`absolute h-[62px] w-[151px] ${at}`}>
      <Grip className="top-4 -left-3.5" />
      <Grip className="top-4 -right-3.5" />
      <div className={`relative flex h-full items-center justify-center pb-0.5 text-[30px] leading-none ${capsule}`}>
        {name}
      </div>
      <Balloon className="-top-[25px] left-[116px]" />
    </div>
  );
}

function Hook({ name, at, out = false }: { name: string; at: string; out?: boolean }) {
  // body, shoulder and tip of the arrow-shaped capsule
  const w = out ? 204 : 177;
  const s = w - 33;
  const shape = `M11 2H${s - 4}Q${s} 2 ${s + 3} 5L${w - 4} 33Q${w - 1} 37 ${w - 4} 41L${s + 3} 69Q${s} 72 ${s - 4} 72H11Q2 72 2 63V11Q2 2 11 2Z`;
  const id = `hook-${out ? "out" : "in"}`;
  return (
    <div className={`absolute h-[74px] ${out ? "w-[204px]" : "w-[177px]"} ${at}`}>
      <Grip className={out ? "top-[22px] -left-3.5" : "top-[22px] -right-3.5"} />
      <svg viewBox={`0 0 ${w} 74`} className="absolute inset-0 h-full w-full" fill="none" aria-hidden>
        <clipPath id={id}>
          <path d={shape} />
        </clipPath>
        <path d={shape} fill="url(#orange)" />
        <path d={shape} stroke="#ffdcb0" strokeWidth="9" clipPath={`url(#${id})`} opacity=".85" />
        <path d={shape} stroke="#500a00" strokeWidth="3" />
      </svg>
      <div
        className={`absolute top-3 left-3 flex h-[51px] items-center justify-center rounded-[5px] border-[3px] border-[#500a00] bg-linear-to-b from-[#ffecb8] to-[#ffcf9f] pb-0.5 text-[30px] leading-none shadow-[0_1px_0_2px_#ffdcb0] ${out ? "w-[148px]" : "w-[122px]"}`}
      >
        {name}
      </div>
    </div>
  );
}

const core =
  "flex items-center justify-center rounded-[10px] border-[3px] border-black bg-[linear-gradient(to_bottom,#d0d0d0_0,#8c8c8c_17px,#4e4e4e_17px,#333_100%)] shadow-[inset_0_0_0_3px_rgb(255_255_255/0.25)]";

function Core({ name }: { name: string }) {
  return (
    <div className={`w-[74px] ${core}`}>
      <span className="rotate-180 text-[39px] leading-none font-bold text-white [writing-mode:vertical-rl]">{name}</span>
    </div>
  );
}

const Port = ({ children, right = false }: Kids & { right?: boolean }) => (
  <li className={`flex h-[59px] items-center pb-0.5 ${right ? "justify-end" : ""}`}>{children}</li>
);

function SplitNode() {
  return (
    <div className="absolute top-[192px] left-[1714px] w-[189px]">
      <Grip className="top-[22px] -left-3.5" />
      <Grip className="top-[81px] -left-3.5" />
      <Grip className="top-[22px] -right-3.5" />
      <Grip className="top-[81px] -right-3.5" />
      <div className={`relative flex h-[133px] justify-between py-[3px] text-[30px] leading-none ${capsule}`}>
        <ul className="flex w-[47px] flex-col justify-center pr-3.5">
          <Port right>L</Port>
          <Port right>i</Port>
        </ul>
        <Core name="Split" />
        <ul className="flex w-[62px] flex-col justify-center pl-3">
          <Port>A</Port>
          <Port>B</Port>
        </ul>
      </div>
      <Balloon className="-top-[25px] left-[154px]" />
    </div>
  );
}

const teeth = Array.from({ length: 13 }, (_, i) => `L146 ${14 + i * 23.66} L134 ${25.8 + i * 23.66}`)
  .join(" ")
  .replace(/L134 [\d.]+$/, "L135 309");

const tagShape = `M11 2H135${teeth}H11Q2 309 2 300V11Q2 2 11 2Z`;

function TagNode() {
  return (
    <div className="absolute top-[484px] left-[2168px] h-[311px] w-[149px]">
      <Grip className="top-[22px] -left-3.5" />
      <Grip className="top-[81px] -left-3.5" />
      <Grip className="top-[140px] -left-3.5" />
      <Grip className="top-[199px] -left-3.5" />
      <Grip className="top-[258px] -left-3.5" />
      <svg viewBox="0 0 149 311" className="absolute inset-0 h-full w-full" fill="none" aria-hidden>
        <linearGradient id="tag-fill" x1="0" y1="0" x2="0" y2="1">
          <stop offset="0" stopColor="#fff0de" />
          <stop offset=".08" stopColor="#ffcb90" />
          <stop offset=".08" stopColor="#ffa62f" />
          <stop offset="1" stopColor="#ff8d14" />
        </linearGradient>
        <linearGradient id="tag-edge" x1="0" y1="0" x2="0" y2="1">
          <stop offset="0" stopColor="#fff" />
          <stop offset="1" stopColor="#ffa22b" />
        </linearGradient>
        <clipPath id="tag-clip">
          <path d={tagShape} />
        </clipPath>
        <path d={tagShape} fill="url(#tag-fill)" />
        <path d={tagShape} stroke="url(#tag-edge)" strokeWidth="9" clipPath="url(#tag-clip)" opacity=".7" />
        <path d={tagShape} stroke="#500a00" strokeWidth="3" />
      </svg>
      <div className="relative flex h-full py-1.5 text-[30px] leading-none">
        <ul className="flex w-[57px] flex-col justify-center pr-3.5">
          {["L", "T", "S", "C", "J"].map((l) => (
            <Port key={l} right>
              {l}
            </Port>
          ))}
        </ul>
        <Core name="Tag" />
      </div>
      <Balloon className="-top-6 left-[102px]" />
    </div>
  );
}

function CanvasWidgets() {
  return (
    <>
      <div className="absolute bottom-0 left-0 flex h-[46px] items-center gap-2 border-t-2 border-r border-b border-[#666] bg-[linear-gradient(to_bottom,#f0f0f0_0,#c8c8c8_35%,#b4b4b4_36%,#8e8e8e_100%)] pl-1">
        <button type="button" aria-label="Next">
          <svg viewBox="0 0 36 36" className="h-9 w-9" aria-hidden>
            <path d="M2 12H15V5L34 18 15 31V24H2Z" fill="#555" stroke="#222" strokeWidth="2.500" strokeLinejoin="round" />
          </svg>
        </button>
        <button type="button" aria-label="Preview">
          <Svg className="h-[39px] w-[39px]">
            <path d="M10 2H29L38 19 29 37H10L1 19Z" fill="url(#hex)" stroke="#111" strokeWidth="2" />
            <path d="M8 20L18 9Q22 6 28 10Q33 16 31 20L22 31Q16 33 11 29Q7 26 8 20Z" fill="url(#steel)" />
            <ellipse cx="25" cy="14" rx="6" ry="4" transform="rotate(45 25 14)" fill="#ddd" stroke="#999" />
          </Svg>
        </button>
        <button type="button" aria-label="Disable">
          <Svg className="h-[39px] w-[39px]">
            <path d="M10 2H29L38 19 29 37H10L1 19Z" fill="url(#hex)" stroke="#111" strokeWidth="2" />
            <path d="M14 13L25 25M25 13L14 25" stroke="#fff" strokeWidth="5" />
          </Svg>
        </button>
        <span className="-ml-1 h-full w-2.5 bg-[#808080]/80" />
      </div>
      <svg viewBox="0 0 90 80" className="absolute right-[9px] bottom-2.5 h-20 w-[90px]" fill="none" aria-hidden>
        <path d="M19 20Q8 42 24 62Q44 80 66 70Q78 64 83 48" stroke="#000" strokeWidth="6" strokeLinecap="round" />
        <path d="M28 12Q34 4 46 5" stroke="#000" strokeWidth="7" strokeLinecap="round" />
        <path d="M1 27L12 24 15 31 7 37Z" fill="#000" />
        <circle cx="50" cy="41" r="32" fill="url(#dial)" stroke="#333" strokeWidth="2" />
        <circle cx="50" cy="41" r="30.500" stroke="#fff" strokeWidth="1.800" />
        <path d="M52 10L62 13 54 20ZM80 43L80 53 70 48ZM48 72L38 69 45 61ZM19 39L19 28 28 36Z" fill="#fff" />
      </svg>
    </>
  );
}

function Canvas() {
  return (
    <main className="relative min-h-0 flex-1 overflow-hidden bg-[#d4d0c8] bg-[linear-gradient(to_right,rgb(0_0_0/0.12)_3px,transparent_3px),linear-gradient(to_bottom,rgb(0_0_0/0.12)_3px,transparent_3px)] bg-size-[443px_148px] bg-position-[378px_58px] text-black">
      {params.map((p) => (
        <Param key={p.at} {...p} />
      ))}
      <Hook name="Input" at="left-[948px] top-[505px]" />
      <Hook name="Input" at="left-[951px] top-[605px]" />
      <Hook name="Output" at="left-[1592px] top-[555px]" out />
      <SplitNode />
      <TagNode />
      <CanvasWidgets />
    </main>
  );
}

/* ---------- taskbar ---------- */

const Rhino = () => (
  <svg viewBox="0 0 40 40" className="h-10 w-10" aria-hidden>
    <rect width="40" height="40" fill="#000" />
    <path d="M0 1H6Q7 8 3 13L0 16ZM9 0H18Q15 9 8 16L9 21 18 14 20 19 30 26 40 18Q37 30 27 38L20 36 6 27 0 21 4 15Q10 9 9 0Z" fill="#fff" />
    <path d="M8 21L17 16M10 22L12 27 19 28M18 20L21 27" stroke="#000" strokeWidth="1.800" fill="none" />
    <text x="28" y="16" fontSize="19" fill="#fff" fontFamily="Liberation Sans, sans-serif">7</text>
  </svg>
);

const apps: { name: string; icon: ReactNode; state: string }[] = [
  {
    name: "Dell",
    state: "",
    icon: (
      <svg viewBox="0 0 38 38" className="h-[38px] w-[38px]" fill="none" aria-hidden>
        <circle cx="19" cy="19" r="17.500" stroke="#fff" strokeWidth="1.800" />
        <text x="19" y="23" textAnchor="middle" fontSize="11" fontWeight="700" fill="#fff" fontFamily="Liberation Sans, sans-serif">DELL</text>
      </svg>
    ),
  },
  {
    name: "File Explorer",
    state: "",
    icon: (
      <svg viewBox="0 0 36 31" className="h-[31px] w-9" aria-hidden>
        <path d="M1 1H14L17 5V9H1Z" fill="#e09a00" />
        <path d="M1 7H14L17 4H35V28H1Z" fill="#ffd45c" />
        <path d="M7 29V19Q7 16 10 16H26Q29 16 29 19V29H24V22H12V29Z" fill="#3a96dd" />
      </svg>
    ),
  },
  {
    name: "Settings",
    state: "",
    icon: (
      <svg viewBox="0 0 30 30" className="h-[30px] w-[30px]" fill="none" stroke="#fff" aria-hidden>
        <circle cx="15" cy="15" r="9.500" strokeWidth="3" />
        {[0, 45, 90, 135, 180, 225, 270, 315].map((a) => (
          <path key={a} d="M15 6V1" strokeWidth="5" transform={`rotate(${a + 22} 15 15)`} />
        ))}
      </svg>
    ),
  },
  { name: "Rhino 7", state: "", icon: <Rhino /> },
  {
    name: "Acrobat",
    state: "",
    icon: (
      <svg viewBox="0 0 38 38" className="h-[38px] w-[38px]" fill="none" aria-hidden>
        <rect width="38" height="38" rx="7" fill="#b30b00" />
        <path d="M8 28C12 31 20 16 20 10C20 6 16 7 17 11C18 18 25 26 30 25C33 23 30 21 26 21C20 21 10 23 8 26Q7 28 9 28" stroke="#fff" strokeWidth="2" />
      </svg>
    ),
  },
  {
    name: "Chrome",
    state: "chrome",
    icon: (
      <svg viewBox="0 0 38 38" className="h-[38px] w-[38px]" aria-hidden>
        <circle cx="19" cy="19" r="18" fill="#ffce44" />
        <path d="M3 10.500A18 18 0 0 1 35 10.500H19L11 23Z" fill="#db4a3e" />
        <path d="M3.200 10.200A18 18 0 0 0 18.500 37L27 23H19L11 23Z" fill="#1aa15f" />
        <circle cx="19" cy="19" r="8.500" fill="#fff" />
        <circle cx="19" cy="19" r="6.800" fill="#4c8bf5" />
      </svg>
    ),
  },
  {
    name: "PowerPoint",
    state: "open",
    icon: (
      <svg viewBox="0 0 39 38" className="h-[38px] w-[39px]" aria-hidden>
        <circle cx="21" cy="19" r="18" fill="#ed6c47" />
        <path d="M21 1A18 18 0 0 1 39 19H21Z" fill="#ff8f6b" />
        <path d="M3 19A18 18 0 0 0 39 19Z" fill="#d35230" />
        <rect y="9" width="21" height="21" rx="2" fill="#c43e1c" />
        <text x="5" y="25" fontSize="16" fontWeight="700" fill="#fff" fontFamily="Open Sans, sans-serif">P</text>
      </svg>
    ),
  },
  { name: "Rhino 7 window", state: "active", icon: <Rhino /> },
];

function Taskbar() {
  return (
    <footer className="flex h-[65px] shrink-0 items-stretch bg-[#454545] text-[21px] text-white">
      <button type="button" aria-label="Start" className="flex w-[54px] items-center justify-center">
        <svg viewBox="0 0 27 27" className="h-[27px] w-[27px]" fill="#fff" aria-hidden>
          <path d="M0 4L11 2V13H0ZM12 2L27 0V13H12ZM0 14H11V25L0 23ZM12 14H27V27L12 25Z" />
        </svg>
      </button>
      <button type="button" aria-label="Cortana" className="flex w-[104px] items-center justify-center">
        <span className="h-[26px] w-[26px] rounded-full border-[3px] border-white" />
      </button>
      <button type="button" aria-label="Task view" className="flex w-[52px] items-center justify-center">
        <svg viewBox="0 0 28 26" className="h-[26px] w-7" fill="none" stroke="#fff" strokeWidth="1.500" aria-hidden>
          <path d="M1 0V5H18V0M1 26V21H18V26M1 9H18V17H1ZM25 0V7M25 13V26" />
          <circle cx="25" cy="10" r="2" fill="#fff" stroke="none" />
        </svg>
      </button>
      <nav className="ml-[18px] flex" aria-label="Running apps">
        {apps.map((a) => (
          <button
            key={a.name}
            type="button"
            aria-label={a.name}
            className={`relative flex w-[81px] items-center justify-center ${a.state === "active" ? "bg-[#6b6b6b]" : ""}`}
          >
            {a.icon}
            {a.state === "active" && <span className="absolute inset-x-0 bottom-0 h-[3px] bg-[#ff9a9c]" />}
            {a.state === "open" && <span className="absolute inset-x-2 bottom-0 h-[3px] bg-[#ff9a9c]" />}
            {a.state === "chrome" && (
              <span className="absolute inset-x-2 bottom-0 flex h-[3px]">
                <span className="flex-1 bg-[#ff9a9c]" />
                <span className="w-[15px] bg-[#c4787a]" />
              </span>
            )}
          </button>
        ))}
      </nav>

      <div className="ml-auto flex items-center pr-[29px]">
        <button type="button" className="flex items-center gap-4 whitespace-pre">
          <svg viewBox="0 0 34 32" className="h-8 w-[34px]" aria-hidden>
            <circle cx="16" cy="16" r="15.500" fill="url(#sun)" />
            <path d="M17 24Q12 24 13 19Q15 16 18 17Q20 9 26 11Q30 13 29 16Q34 17 33 22Q32 24 30 24Z" fill="#bfe4fa" />
          </svg>
          <span>18°C</span>
          <span>Mostly sunny</span>
        </button>
        <button type="button" aria-label="Show hidden icons" className="ml-8">
          <ChevronUp className="h-7 w-7" strokeWidth={1.5} />
        </button>
        <div className="ml-7 flex items-center gap-[25px]">
          <svg viewBox="0 0 27 24" className="h-6 w-[27px]" fill="none" stroke="#fff" strokeWidth="1.600" aria-hidden>
            <path d="M10 6H25V18H6M25 10H27V14H25M3 1V5M7 1V5M1 5H9V9Q8 12 5 12Q2 12 1 9ZM5 12V19H10V15" />
          </svg>
          <svg viewBox="0 0 24 24" className="h-6 w-6" fill="none" stroke="#fff" strokeWidth="1.500" aria-hidden>
            <path d="M1 22Q2 4 22 2M6 22Q7 9 22 7M11 22Q12 14 22 12M16 22Q17 18 22 17" />
            <circle cx="20" cy="21" r="2" fill="#fff" stroke="none" />
          </svg>
          <svg viewBox="0 0 28 24" className="h-6 w-7" fill="none" stroke="#fff" strokeWidth="1.500" aria-hidden>
            <path d="M1 8H5L11 3V21L5 16H1ZM15 8Q17 12 15 16M19 5Q23 12 19 19" />
            <path d="M23 2Q29 12 23 22" stroke="#999" />
          </svg>
          <svg viewBox="0 0 28 20" className="h-5 w-7" aria-hidden>
            <path d="M6 19Q0 18 1 12Q2 8 6 8Q8 0 15 1Q22 1 23 9Q28 10 27 15Q26 19 22 19Z" fill="#fff" />
            <path d="M14 15V8M10 10L14 6 18 10" stroke="#454545" strokeWidth="2.500" fill="none" />
          </svg>
          <svg viewBox="0 0 28 26" className="h-[26px] w-7" aria-hidden>
            <path d="M7 1L13 5 7 9 1 5ZM19 1L25 5 19 9 13 5ZM7 9L13 13 7 17 1 13ZM19 9L25 13 19 17 13 13ZM7 18L13 15 13 22Z" fill="#fff" />
            <circle cx="19" cy="18" r="7.500" fill="#d80020" />
            <path d="M16 15L22 21M22 15L16 21" stroke="#fff" strokeWidth="2" />
          </svg>
        </div>
        <span className="ml-5 text-[19px]">ENG</span>
        <button type="button" aria-label="3 notifications" className="relative ml-7 h-10 w-[38px]">
          <svg viewBox="0 0 38 40" className="h-10 w-[38px]" fill="none" aria-hidden>
            <path d="M1 1H26V22H13L8 27V22H1Z" fill="#fff" />
            <path d="M5 7H22M5 12H22M5 17H15" stroke="#454545" strokeWidth="1.800" />
            <circle cx="25" cy="26" r="12.500" fill="#454545" stroke="#999" strokeWidth="1.500" />
          </svg>
          <span className="absolute right-0 bottom-0 w-[26px] text-center text-[19px] leading-7 font-semibold">3</span>
        </button>
      </div>
    </footer>
  );
}

/* ---------- window ---------- */

const menu = ["File", "Edit", "View", "Display", "Solution", "Help", "MetaHopper"];

export default function App() {
  return (
    <div className="flex h-screen flex-col overflow-hidden bg-[#e2e4ea] font-['Open_Sans','Noto_Sans',sans-serif] text-[19px] text-black">
      <Defs />
      <div className="flex min-h-0 flex-1">
        <div className="flex min-w-0 flex-1 flex-col border-t-2 border-r-2 border-[#6e6e6e] bg-[#f0f0f0]">
          <header className="flex h-[45px] shrink-0 items-center justify-between bg-white pb-0.5 pl-[9px]">
            <h1 className="leading-6">Grasshopper - Dabble Wind Rose Tutorial*</h1>
            <div className="flex">
              <button type="button" aria-label="Minimise" className="flex h-[43px] w-[76px] items-center justify-center">
                <svg viewBox="0 0 14 14" className="h-3.5 w-3.5" stroke="#000" strokeWidth="1.400" aria-hidden>
                  <path d="M0 7H14" />
                </svg>
              </button>
              <button type="button" aria-label="Maximise" className="flex h-[43px] w-[76px] items-center justify-center">
                <svg viewBox="0 0 14 14" className="h-3.5 w-3.5" fill="none" stroke="#000" strokeWidth="1.400" aria-hidden>
                  <path d="M1 1H13V13H1Z" />
                </svg>
              </button>
              <button type="button" aria-label="Close" className="flex h-[43px] w-[76px] items-center justify-center">
                <svg viewBox="0 0 14 14" className="h-3.5 w-3.5" stroke="#000" strokeWidth="1.400" aria-hidden>
                  <path d="M1 1L13 13M13 1L1 13" />
                </svg>
              </button>
            </div>
          </header>

          <div className="flex h-[43px] shrink-0 items-center justify-between bg-linear-to-r from-[#f0f0f0] to-[#fcfcfc] pr-[11px] pl-[14px]">
            <nav className="flex gap-[19px]" aria-label="Menu">
              {menu.map((m) => (
                <button key={m} type="button" className="leading-6">
                  {m}
                </button>
              ))}
            </nav>
            <span className="leading-6">Dabble Wind Rose Tutorial*</span>
          </div>

          <div className="flex h-[35px] w-[822px] shrink-0" role="tablist">
            {tabs.map(([name, icon]) => (
              <button
                key={name}
                type="button"
                role="tab"
                aria-label={name}
                aria-selected={name === "Human"}
                className={`flex flex-1 items-center justify-center ${
                  name === "Human" ? "rounded-t-lg border border-b-0 border-[#c0c0c0] bg-linear-to-b from-white to-[#f4f4f4]" : ""
                }`}
              >
                {icon}
              </button>
            ))}
          </div>

          <div className="flex h-[189px] shrink-0 items-start gap-[7px] rounded-t-lg border-t-2 border-b-2 border-t-[#c2c2c2] border-b-[#8c8c8c] bg-linear-to-b from-[#d8d8d8] to-[#f0f0f0] pl-[3px]">
            {panels.map((p) => (
              <RibbonPanel key={p.label} panel={p} />
            ))}
          </div>

          <div className="shrink-0">
            <Toolbar />
          </div>
          <Canvas />
          <div className="flex h-[21px] shrink-0 items-start justify-between overflow-hidden border-t border-white pr-14 pl-[3px]">
            <div className="flex items-start gap-1.5">
              <svg viewBox="0 0 26 26" className="mt-0.5 h-[26px] w-[26px]" aria-hidden>
                <circle cx="13" cy="13" r="12" fill="url(#sky)" stroke="#1a2a9a" strokeWidth="2.500" />
                <path d="M10 4H16V14H10ZM10 17H16V21H10Z" fill="#bfe9ff" stroke="#14268a" strokeWidth="1.500" />
              </svg>
              <span className="pt-0.5 leading-7">Autosave complete (45 seconds ago)</span>
            </div>
            <span className="pt-0.5 leading-7 text-[#777]">1.0.0007</span>
          </div>
        </div>

        <div className="flex w-[9px] shrink-0 flex-col bg-linear-to-r from-[#c4c6ce] to-[#e4e7f0]" aria-hidden>
          <span className="h-[68px] bg-linear-to-r from-[#d8d8d8] to-white" />
          <span className="h-[54px] bg-linear-to-r from-[#c8c8c8] to-[#ececec]" />
          <span className="h-[14px] border border-l-0 border-[#b4b4b4]" />
          <span className="h-[13px] border border-t-0 border-l-0 border-[#b4b4b4]" />
          <svg viewBox="0 0 9 24" className="mt-2 h-6 w-[9px]" fill="none" stroke="#777" strokeWidth="1.500">
            <path d="M0 3H3V6H7V10Q9 12 7 14V18H3V21H0" />
          </svg>
          <span className="mt-[5px] h-[82px] border-y border-[#c0c6dc]" />
          <svg viewBox="0 0 9 24" className="mt-6 h-6 w-[9px]" fill="none" stroke="#aab2cc" strokeWidth="1.500">
            <path d="M0 3H3V6H7V10Q9 12 7 14V18H3V21H0" />
          </svg>
          <span className="mt-1 flex-1 border-t border-[#b4bcd4]" />
        </div>
      </div>
      <Taskbar />
    </div>
  );
}
